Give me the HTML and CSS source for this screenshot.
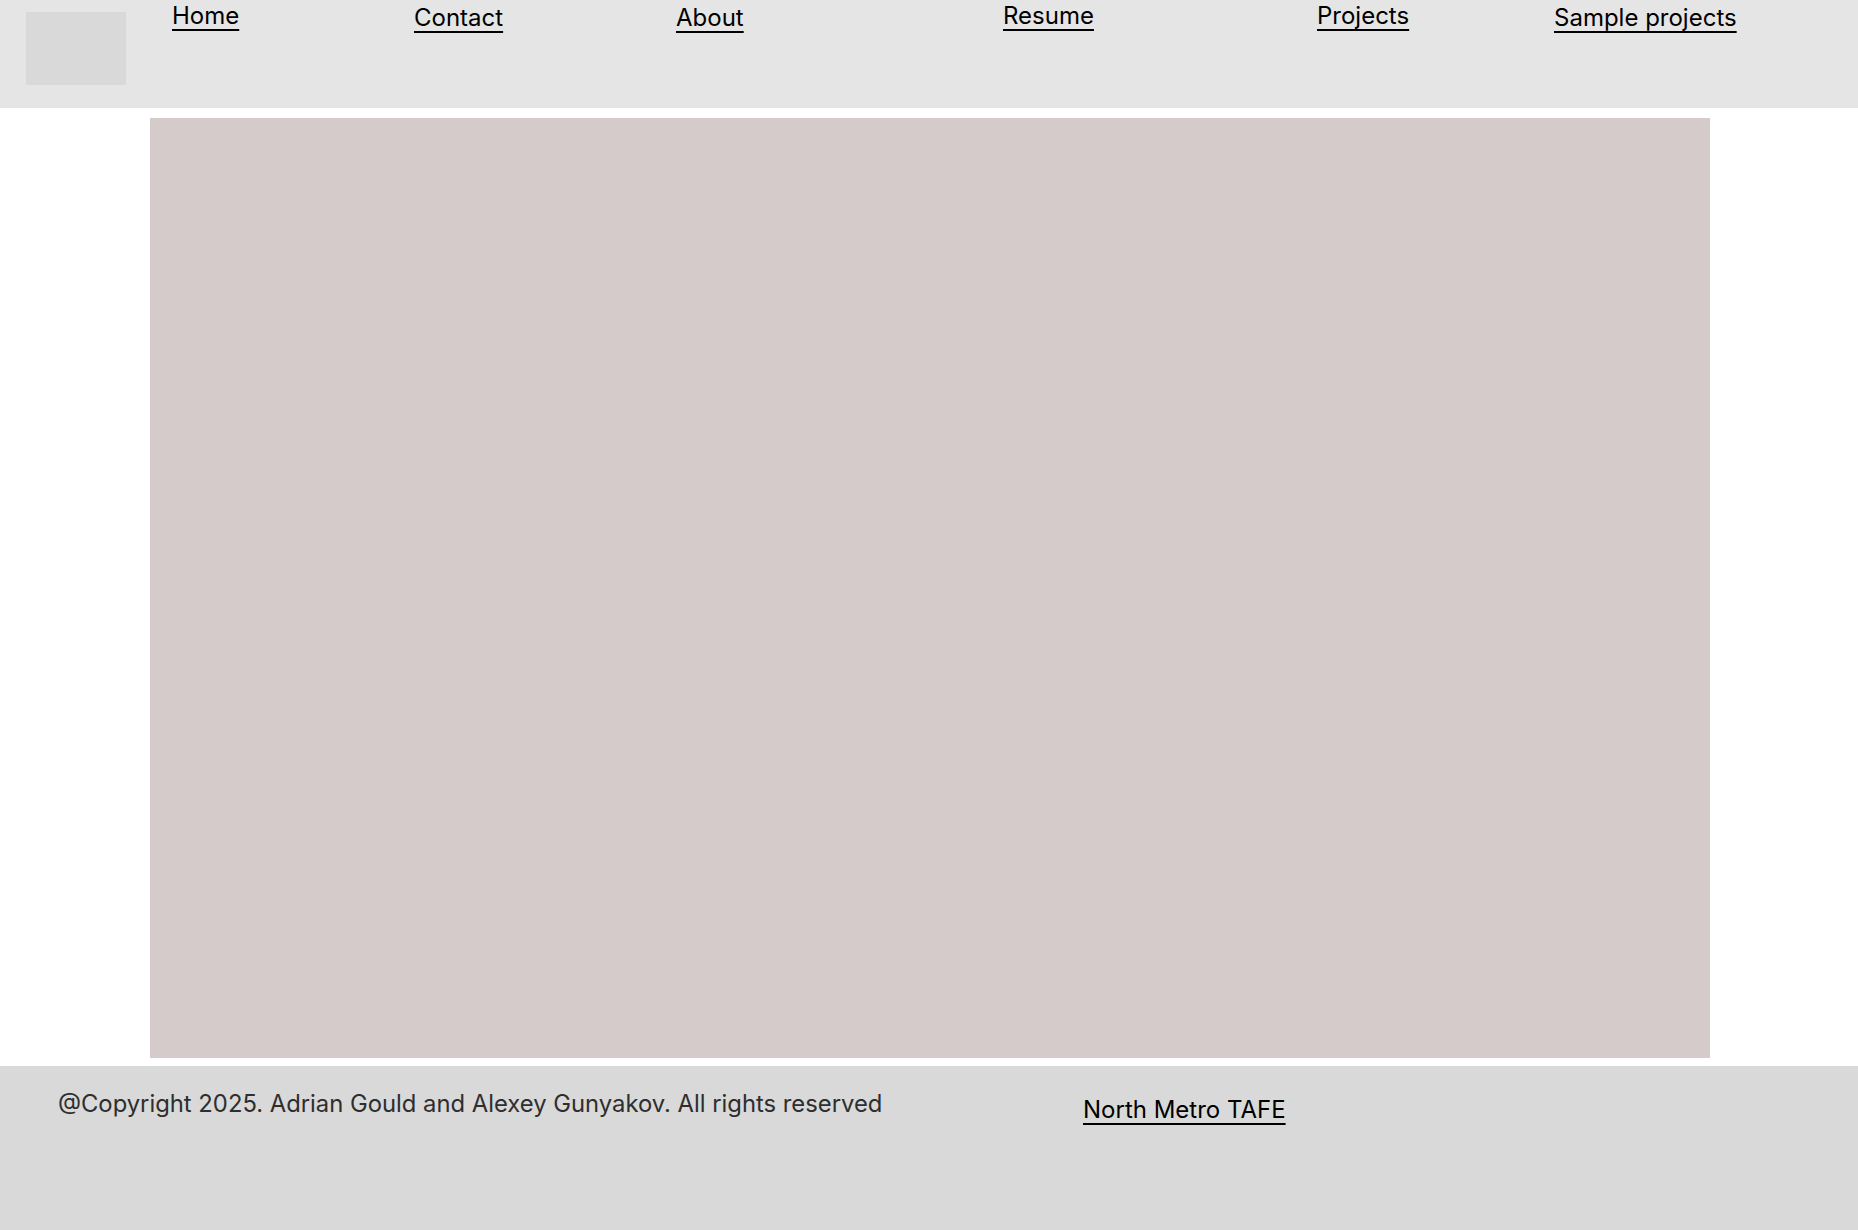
FILE: index.html
```html
<!DOCTYPE html>
<html lang="en">
<head>
<meta charset="utf-8">
<title>Portfolio</title>
<link rel="stylesheet" href="styles.css">
</head>
<body>
<header class="site-header">
  <div class="logo"></div>
  <nav class="nav">
    <a class="nav-link" href="#">Home</a>
    <a class="nav-link nav-link--low" href="#">Contact</a>
    <a class="nav-link nav-link--low" href="#">About</a>
    <a class="nav-link" href="#">Resume</a>
    <a class="nav-link" href="#">Projects</a>
    <a class="nav-link nav-link--low" href="#">Sample projects</a>
  </nav>
</header>
<main class="content">
  <div class="hero"></div>
</main>
<footer class="site-footer">
  <p class="copyright">@Copyright 2025. Adrian Gould and Alexey Gunyakov. All rights reserved</p>
  <a class="footer-link" href="#">North Metro TAFE</a>
</footer>
</body>
</html>
```
FILE: styles.css
```css
html, body {
  margin: 0;
  padding: 0;
  background: #ffffff;
  font-family: Inter, "Noto Sans", "Liberation Sans", sans-serif;
}

body {
  display: flex;
  flex-direction: column;
  min-height: 1230px;
}

.site-header {
  height: 108px;
  background: #e5e5e5;
  display: flex;
  align-items: flex-start;
}

.logo {
  width: 100px;
  height: 73px;
  margin: 12px 0 0 26px;
  background: #d9d9d9;
  border-radius: 2px;
  flex: none;
}

.nav {
  margin-left: 46px;
  display: grid;
  grid-template-columns: 242px 262px 327px 314px 237px auto;
  align-items: start;
}

.nav-link {
  justify-self: start;
  color: #000000;
  font-size: 24px;
  line-height: 1.2;
  padding-top: 2px;
  text-decoration: underline;
  text-underline-offset: 5px;
  text-decoration-thickness: 1.5px;
}

.nav-link--low {
  padding-top: 4px;
}

.content {
  padding: 10px 0 8px 150px;
  display: flex;
}

.hero {
  width: 1560px;
  height: 940px;
  background: #d4cbca;
}

.site-footer {
  flex: 1;
  background: #d9d9d9;
  display: grid;
  grid-template-columns: 1025px auto;
  align-items: start;
  padding-left: 58px;
}

.copyright {
  margin: 0;
  padding-top: 24px;
  font-size: 23.8px;
  line-height: 1.2;
  color: #2e2e2e;
}

.footer-link {
  justify-self: start;
  margin-top: 30px;
  font-size: 24px;
  line-height: 1.2;
  color: #000000;
  text-decoration: underline;
  text-underline-offset: 5px;
  text-decoration-thickness: 1.5px;
}
```
